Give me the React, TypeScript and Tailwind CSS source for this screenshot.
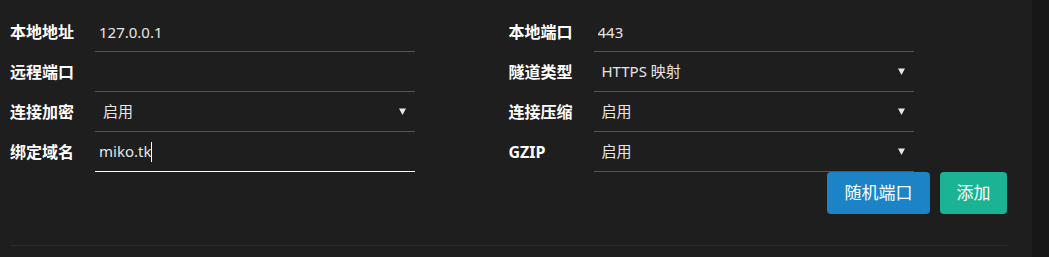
import React from 'react'

const font = "font-['Noto_Sans','Noto_Sans_CJK_SC',sans-serif]"

function Arrow() {
  return (
    <svg width="7" height="7" viewBox="0 0 7 7" className="shrink-0">
      <path d="M0 0.5 H7 L3.5 7 Z" fill="#e8e8e8" />
    </svg>
  )
}

type Field = {
  label: string
  kind: 'input' | 'select' | 'focus'
  value: string
}

function FormRow({ field }: { field: Field }) {
  return (
    <div className="flex items-center h-[40px]">
      <div className="w-[85px] text-[16px] font-bold text-white leading-none">{field.label}</div>
      {field.kind === 'select' ? (
        <div className="w-[320px] h-[40px] border-b border-[#555] flex items-center justify-between pl-[8px] pr-[9px] text-[15px] text-[#e6e6e6]">
          <span>{field.value}</span>
          <Arrow />
        </div>
      ) : field.kind === 'focus' ? (
        <div className="w-[320px] h-[40px] border-b border-white flex items-center pl-[4px] text-[15px] text-[#e6e6e6]">
          <span>{field.value}</span>
          <span className="w-px h-[20px] bg-white" />
        </div>
      ) : (
        <input
          readOnly
          value={field.value}
          className="w-[320px] h-[40px] border-b border-[#555] bg-transparent pl-[4px] text-[15px] text-[#e6e6e6] outline-none"
        />
      )}
    </div>
  )
}

const left: Field[] = [
  { label: '本地地址', kind: 'input', value: '127.0.0.1' },
  { label: '远程端口', kind: 'input', value: '' },
  { label: '连接加密', kind: 'select', value: '启用' },
  { label: '绑定域名', kind: 'focus', value: 'miko.tk' },
]

const right: Field[] = [
  { label: '本地端口', kind: 'input', value: '443' },
  { label: '隧道类型', kind: 'select', value: 'HTTPS 映射' },
  { label: '连接压缩', kind: 'select', value: '启用' },
  { label: 'GZIP', kind: 'select', value: '启用' },
]

export default function App() {
  return (
    <div className={`w-[1049px] h-[257px] bg-[#1e1e1e] flex overflow-hidden ${font}`}>
      <div className="w-[1032px] pl-[10px] pt-[12px]">
        <div className="w-[997px]">
          <div className="grid grid-cols-2">
            <div>
              {left.map((f) => (
                <FormRow key={f.label} field={f} />
              ))}
            </div>
            <div>
              {right.map((f) => (
                <FormRow key={f.label} field={f} />
              ))}
            </div>
          </div>
          <div className="flex justify-end gap-[10px]">
            <button className="w-[103px] h-[42px] rounded-[4px] bg-[#1c84c6] text-white text-[17px]">
              随机端口
            </button>
            <button className="w-[67px] h-[42px] rounded-[4px] bg-[#1ab394] text-white text-[17px]">
              添加
            </button>
          </div>
          <div className="mt-[31px] border-t border-[#2b2b2b]" />
        </div>
      </div>
      <div className="flex-1 bg-[#171717]" />
    </div>
  )
}
